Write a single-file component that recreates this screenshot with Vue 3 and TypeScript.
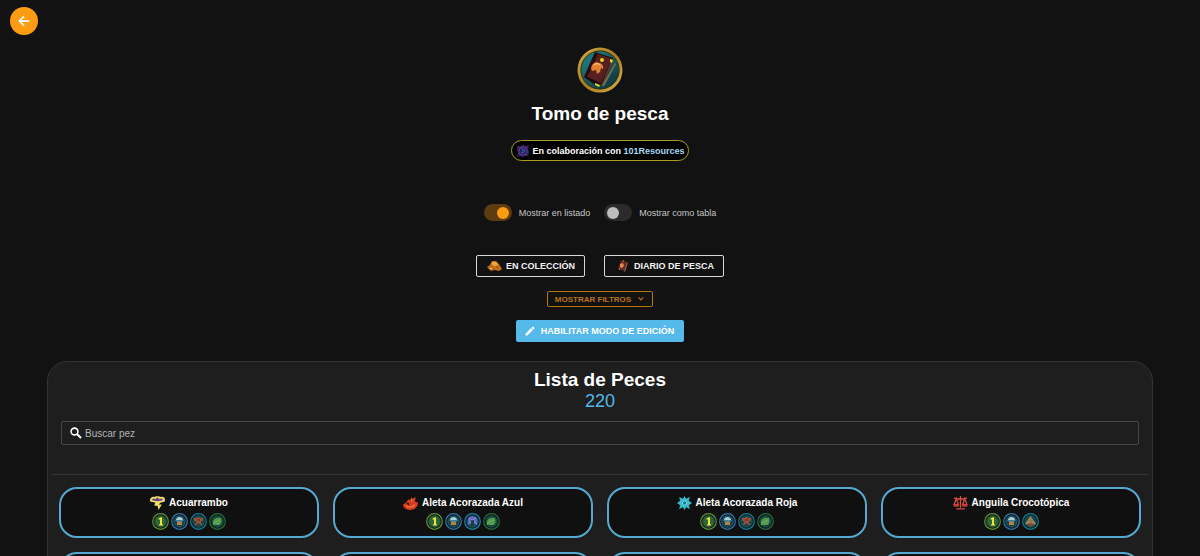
<script setup lang="ts">
import { ref } from 'vue'

type School = 'storm' | 'fire' | 'ice' | 'balance'
type Badge = 'rank' | 'chest' | 'beast' | 'arch' | 'leaf' | 'pyramid'

interface Fish {
  name: string
  school: School
  badges: Badge[]
}

const fishes: Fish[] = [
  { name: 'Acuarrambo', school: 'storm', badges: ['rank', 'chest', 'beast', 'leaf'] },
  { name: 'Aleta Acorazada Azul', school: 'fire', badges: ['rank', 'chest', 'arch', 'leaf'] },
  { name: 'Aleta Acorazada Roja', school: 'ice', badges: ['rank', 'chest', 'beast', 'leaf'] },
  { name: 'Anguila Crocotópica', school: 'balance', badges: ['rank', 'chest', 'pyramid'] },
]

const ringColors: Record<Badge, string> = {
  rank: '#5f8f34',
  chest: '#3474a6',
  beast: '#157d93',
  arch: '#2382a8',
  leaf: '#256b3c',
  pyramid: '#0f7f90',
}

const total = 220
const upcoming = 4
const asList = ref(true)
const asTable = ref(false)
const query = ref('')
</script>

<template>
  <div class="page">
    <a class="back" href="#" aria-label="Volver">
      <svg viewBox="0 0 24 24" width="14" height="14">
        <path d="M21 12H5M12 4l-8 8 8 8" fill="none" stroke="#fff" stroke-width="3" />
      </svg>
    </a>

    <header class="hero">
      <svg class="emblem" viewBox="0 0 46 46" width="46" height="46" aria-hidden="true">
        <defs>
          <linearGradient id="gold" x1="0" y1="0" x2="1" y2="1">
            <stop offset="0" stop-color="#d6ab3c" />
            <stop offset="0.5" stop-color="#a87a1c" />
            <stop offset="1" stop-color="#d9ae45" />
          </linearGradient>
          <linearGradient id="sea" x1="0" y1="0" x2="0.8" y2="1">
            <stop offset="0" stop-color="#248d92" />
            <stop offset="0.6" stop-color="#14565c" />
            <stop offset="1" stop-color="#0b3238" />
          </linearGradient>
        </defs>
        <circle cx="23" cy="23" r="21" fill="url(#sea)" stroke="url(#gold)" stroke-width="3" />
        <circle cx="23" cy="23" r="19" fill="none" stroke="#41300c" stroke-width="1" />
        <path d="M18 5l18 6-11 26-5 2L7 30z" fill="#1c0a0c" />
        <path d="M19 6l16 6-11 24L8 29z" fill="#55201f" />
        <path d="M19 6l2 1L10 30l-2-1z" fill="#260c10" />
        <path d="M25 36l10-24 1 3-9 21-4 2z" fill="#5b3a2c" />
        <path d="M25 39L38 16l1 1-12 22z" fill="#8a7148" />
        <circle cx="25" cy="13" r="2" fill="#f4cf18" />
        <path d="M33 12l3 1-1 3-2-1zM18 36l5 2-1 2-4-2z" fill="#e9d21d" />
        <path
          d="M14 21c1-5 5-7 8-5 3 0 5 3 4 6l-2-1-1 4-3 2-1-4-4 1z"
          fill="#e07f31"
        />
        <path d="M17 18c2-2 4-2 6 0" fill="none" stroke="#f7b867" stroke-width="1.4" />
      </svg>
      <h1>Tomo de pesca</h1>
      <a class="collab" href="#">
        <svg viewBox="0 0 14 14" width="14" height="14" aria-hidden="true">
          <path d="M1 2l4 0 2-1 3 1 3-1-1 4 1 3-1 4-3 0-2 1-3-1-3 1 1-4-1-3z" fill="#3b2165" />
          <circle cx="7" cy="7" r="4" fill="#182052" stroke="#6c3190" />
          <path d="M5 5l3 0 1 2-2 2-2-1M7 5v4" fill="none" stroke="#4154a6" />
        </svg>
        <span>En colaboración con <b>101Resources</b></span>
      </a>
    </header>

    <div class="switches">
      <label class="switch">
        <input v-model="asList" type="checkbox" role="switch" />
        <span>Mostrar en listado</span>
      </label>
      <label class="switch">
        <input v-model="asTable" type="checkbox" role="switch" />
        <span>Mostrar como tabla</span>
      </label>
    </div>

    <div class="actions">
      <button class="outlined" type="button">
        <svg viewBox="0 0 15 12" width="15" height="12" aria-hidden="true">
          <path d="M0 7l3-2 2-4 4 0 3 3 3 5-3 2-4-1-4 1z" fill="#c66f18" />
          <path d="M4 4l2-2 3 0 2 3-3 1z" fill="#efaa43" />
          <path d="M1 8l3-1 3 2-3 1zM9 7l3 1" fill="#f2c05e" stroke="#81400f" stroke-width="0.6" />
        </svg>
        En colección
      </button>
      <button class="outlined" type="button">
        <svg viewBox="0 0 15 12" width="15" height="12" aria-hidden="true">
          <path d="M6 0l6 2-3 9-6-2z" fill="#6b2627" />
          <path d="M12 2l1 1-3 9-1-1z" fill="#806249" />
          <path d="M5 4l3-1 1 3-2 2-2-1z" fill="#e58a43" />
          <path d="M8 1h1M4 9h1" stroke="#e6c52b" />
        </svg>
        Diario de pesca
      </button>
    </div>

    <button class="filters" type="button">
      Mostrar filtros
      <svg viewBox="0 0 10 10" width="8" height="8" aria-hidden="true">
        <path d="M2 3l3 3 3-3" fill="none" stroke="currentColor" stroke-width="1.5" />
      </svg>
    </button>

    <button class="edit" type="button">
      <svg viewBox="0 0 24 24" width="12" height="12" aria-hidden="true">
        <path
          d="M3 17.25V21h3.75L17.8 9.94l-3.75-3.75zM20.7 7.04a1 1 0 0 0 0-1.41l-2.34-2.34a1 1 0 0 0-1.41 0l-1.83 1.83 3.75 3.75z"
          fill="#fff"
        />
      </svg>
      Habilitar modo de edición
    </button>

    <main class="panel">
      <div class="panel-head">
        <h2>Lista de Peces</h2>
        <p class="count">{{ total }}</p>
        <label class="search">
          <svg viewBox="0 0 12 12" width="12" height="12" aria-hidden="true">
            <circle cx="4.5" cy="4.5" r="3.4" fill="none" stroke="#fff" stroke-width="1.6" />
            <path d="M7 7l4 4" stroke="#fff" stroke-width="2" />
          </svg>
          <input v-model="query" type="text" placeholder="Buscar pez" aria-label="Buscar pez" />
        </label>
      </div>

      <div class="grid">
        <article v-for="fish in fishes" :key="fish.name" class="card">
          <h3>
            <svg class="school" viewBox="0 0 14 13" width="15" height="14" aria-hidden="true">
              <template v-if="fish.school === 'storm'">
                <path
                  d="M0 4c0-3 3-4 4-3 1-1 5-1 6 0 2-1 4 0 4 3 0 2-3 2-4 2L8 8h3l-3 5-1-4H4l1-3C3 6 0 6 0 4z"
                  fill="#f0df63"
                />
                <path d="M2 4c0-2 2-2 3-1 1-2 3-2 4 0 1-1 3-1 3 1-2 1-8 1-10 0z" fill="#6d3a91" />
              </template>
              <template v-else-if="fish.school === 'fire'">
                <path
                  d="M8 0l0 3 4-2-1 4 3 1c0 4-3 7-7 7-4 0-7-2-7-5l3-2 2 3 1-2-3-1 2-3 2 1z"
                  fill="#d83b22"
                />
                <path d="M3 9c2 2 6 2 8-1M8 2v3" fill="none" stroke="#f47b35" stroke-width="1.2" />
              </template>
              <template v-else-if="fish.school === 'ice'">
                <path
                  d="M7 0l1.5 2.500L12 1l-1 3.500 3 2-3 2 1 3.500-3.500-1.500L7 13l-1.500-2.500L2 12l1-3.500-3-2 3-2L2 1l3.500 1.500z"
                  fill="#38bccb"
                />
                <circle cx="7" cy="6.500" r="2" fill="#177c93" stroke="#8eeaf0" stroke-width="0.7" />
              </template>
              <template v-else>
                <path
                  d="M7 0v11M1 2c3 1 9 1 12 0M3 12h8M3 2.500L1 8h4zM11 2.500L9 8h4z"
                  fill="none"
                  stroke="#d84b3f"
                  stroke-width="1.2"
                />
                <path d="M0 8h6l-1 2H1zM8 8h6l-1 2H9z" fill="#c23a33" />
              </template>
            </svg>
            {{ fish.name }}
          </h3>
          <div class="badges">
            <svg
              v-for="badge in fish.badges"
              :key="badge"
              viewBox="0 0 17 17"
              width="17"
              height="17"
              aria-hidden="true"
            >
              <circle cx="8.5" cy="8.5" r="7.8" fill="#0b1718" :stroke="ringColors[badge]" stroke-width="1.2" />
              <circle cx="8.5" cy="8.5" r="5.7" fill="#154244" :stroke="ringColors[badge]" stroke-width="0.6" />
              <template v-if="badge === 'rank'">
                <circle cx="8.5" cy="8.5" r="5" fill="#2b6840" />
                <path d="M6.5 5.5L9 4.200h1v7h1v1.300H7v-1.300h1V6.500H6.500z" fill="#f2e332" />
              </template>
              <template v-else-if="badge === 'chest'">
                <path d="M5 7c0-4 7-4 7 0z" fill="#a9d0da" />
                <path d="M4 7h9l-2 2H6z" fill="#4f8192" />
                <path d="M6 9h5v3H6z" fill="#b68146" />
              </template>
              <template v-else-if="badge === 'beast'">
                <path d="M8.500 4l2 1 3 0-1 3-2 1 2 3-2 0-2-2-2 2-2 0 2-3-2-1-1-3 3 0z" fill="#98503a" />
                <path d="M7 7h1M9 7h1" stroke="#29160f" />
              </template>
              <template v-else-if="badge === 'arch'">
                <path d="M4 12V7c0-5 9-5 9 0v5l-3-1V8c0-2-3-2-3 0v3z" fill="#6666c5" />
                <path d="M5 5l3 2 4-2M5 9h2M10 9h2" stroke="#a08ee0" fill="none" stroke-width="0.8" />
              </template>
              <template v-else-if="badge === 'leaf'">
                <path d="M4 9c0-3 3-5 8-4 1 4 1 7-4 7H4z" fill="#4f9a4a" />
                <path d="M4 10l7-3M7 11h4" stroke="#7fb866" stroke-width="0.7" />
              </template>
              <template v-else>
                <path d="M8.500 3L14 11l-3 1H6l-3-1z" fill="#a78b64" />
                <path d="M8.500 3l1 8M6 8l5 0" stroke="#7a6549" stroke-width="0.7" />
                <path d="M4 11l4-1 5 1-4 3z" fill="#7b4c36" />
              </template>
            </svg>
          </div>
        </article>
        <article v-for="n in upcoming" :key="n" class="card"></article>
      </div>
    </main>
  </div>
</template>

<style>
body {
  margin: 0;
  background: #121212;
  overflow: hidden;
}
</style>

<style scoped>
.page {
  position: relative;
  display: flex;
  flex-direction: column;
  align-items: center;
  height: 100vh;
  box-sizing: border-box;
  padding: 47px 47px 0;
  overflow: hidden;
  background: #121212;
  color: #fff;
  font-family: 'Liberation Sans', Arial, sans-serif;
  font-size: 10px;
}

.page > * {
  flex-shrink: 0;
}

.back {
  position: absolute;
  top: 7px;
  left: 10px;
  display: flex;
  align-items: center;
  justify-content: center;
  width: 28px;
  height: 28px;
  border-radius: 50%;
  background: #fb9c12;
}

.hero {
  display: flex;
  flex-direction: column;
  align-items: center;
}

h1,
h2 {
  margin: 0;
  font-size: 19px;
  line-height: 24px;
}

h1 {
  margin: 9px 0 14px;
}

.collab {
  display: flex;
  align-items: center;
  gap: 2px;
  height: 21px;
  box-sizing: border-box;
  padding: 0 3px 0 4px;
  border: 1px solid #a8a01c;
  border-radius: 11px;
  background: #000;
  color: #fff;
  font-size: 9px;
  font-weight: bold;
  text-decoration: none;
}

.collab b {
  color: #a6d8f4;
}

.switches {
  display: flex;
  gap: 14px;
  margin-top: 43px;
}

.switch {
  display: flex;
  align-items: center;
  gap: 7px;
  height: 17px;
  color: #c6c6c6;
  font-size: 9px;
}

.switch input {
  appearance: none;
  display: flex;
  align-items: center;
  width: 28px;
  height: 17px;
  box-sizing: border-box;
  margin: 0;
  padding: 0 3px;
  border-radius: 9px;
  background: #2b2b2b;
}

.switch input::before {
  content: '';
  width: 12px;
  height: 12px;
  border-radius: 50%;
  background: #bdbdbd;
}

.switch input:checked {
  justify-content: flex-end;
  background: #5c3c10;
}

.switch input:checked::before {
  background: #fb9c12;
}

button {
  display: flex;
  align-items: center;
  justify-content: center;
  box-sizing: border-box;
  border-radius: 2px;
  background: transparent;
  font-family: inherit;
  font-weight: bold;
  text-transform: uppercase;
}

.actions {
  display: flex;
  gap: 19px;
  margin-top: 34px;
}

.outlined {
  gap: 4px;
  height: 22px;
  padding: 0 9px 0 10px;
  border: 1px solid #d8d8d8;
  color: #f2f2f2;
  font-size: 9px;
}

.filters {
  gap: 6px;
  height: 16px;
  margin-top: 14px;
  padding: 0 7px;
  border: 1px solid #b87312;
  color: #b87312;
  font-size: 8px;
}

.edit {
  gap: 5px;
  height: 22px;
  margin-top: 13px;
  padding: 0 10px 0 8px;
  border: 0;
  background: #55b9e9;
  color: #fff;
  font-size: 9px;
}

.panel {
  align-self: stretch;
  margin-top: 19px;
  padding: 0 4px;
  border: 1px solid #333;
  border-radius: 20px 20px 0 0;
  background: #1e1e1e;
}

.panel-head {
  padding: 6px 9px 29px;
  border-bottom: 1px solid #343434;
  text-align: center;
}

.count {
  margin: 0 0 11px;
  color: #55b9e9;
  font-size: 18px;
  line-height: 18px;
}

.search {
  display: flex;
  align-items: center;
  gap: 3px;
  height: 24px;
  box-sizing: border-box;
  padding: 0 8px;
  border: 1px solid #484848;
  border-radius: 2px;
}

.search input {
  flex: 1;
  min-width: 0;
  padding: 0;
  border: 0;
  outline: 0;
  background: transparent;
  color: #fff;
  font-family: inherit;
  font-size: 10px;
}

.search input::placeholder {
  color: #b4b4b4;
  opacity: 1;
}

.grid {
  display: grid;
  grid-template-columns: repeat(4, 1fr);
  gap: 14px;
  padding: 12px 7px 14px;
}

.card {
  display: flex;
  flex-direction: column;
  align-items: center;
  gap: 3px;
  min-height: 51px;
  box-sizing: border-box;
  padding: 6px 8px;
  border: 2px solid #55a9d0;
  border-radius: 18px;
  background: #101010;
}

h3 {
  display: flex;
  align-items: center;
  gap: 4px;
  margin: 0;
  font-size: 10px;
  line-height: 15px;
}

.badges {
  display: flex;
  gap: 2px;
}
</style>
